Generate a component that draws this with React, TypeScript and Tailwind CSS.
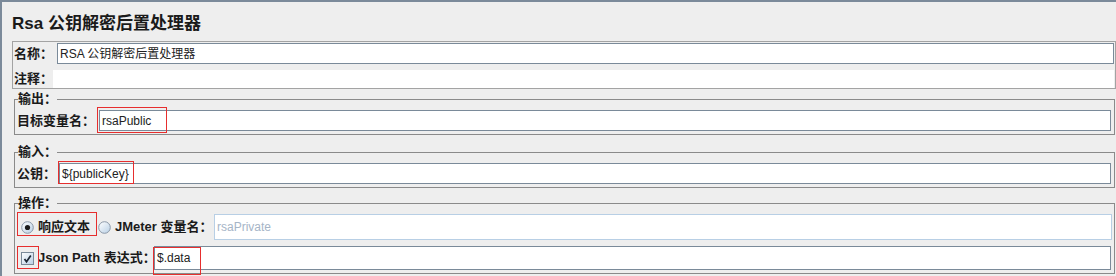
import React from 'react';

const Field = ({ value, className = '' }: { value?: React.ReactNode; className?: string }) => (
  <div className={`flex items-center bg-white border border-[#7a8a99] pl-[2px] text-[12px] text-[#222] whitespace-nowrap ${className}`}>
    {value}
  </div>
);

const Radio = ({ checked }: { checked?: boolean }) => (
  <svg width="13" height="13" viewBox="0 0 13 13" className="shrink-0">
    <defs>
      <linearGradient id={checked ? 'rg1' : 'rg2'} x1="0" y1="0" x2="1" y2="1">
        <stop offset="0" stopColor="#ffffff" />
        <stop offset="1" stopColor="#b8cfe5" />
      </linearGradient>
    </defs>
    <circle cx="6.5" cy="6.5" r="5.8" fill={`url(#${checked ? 'rg1' : 'rg2'})`} stroke="#8a98a8" strokeWidth="1" />
    {checked && <circle cx="6.5" cy="6.5" r="2.6" fill="#1a1a1a" />}
  </svg>
);

const Checkbox = () => (
  <svg width="13" height="13" viewBox="0 0 13 13" className="shrink-0">
    <defs>
      <linearGradient id="cbg" x1="0" y1="0" x2="1" y2="1">
        <stop offset="0" stopColor="#ffffff" />
        <stop offset="1" stopColor="#b8cfe5" />
      </linearGradient>
    </defs>
    <rect x="0.5" y="0.5" width="12" height="12" fill="url(#cbg)" stroke="#7a8a99" />
    <path d="M3.5 7 L5.5 9.8 L9.8 3.5" fill="none" stroke="#1f2a36" strokeWidth="1.7" />
  </svg>
);

const Mark = ({ className }: { className: string }) => (
  <div className={`absolute border border-[#e62e2e] pointer-events-none ${className}`} />
);

const App = () => {
  return (
    <div className="relative w-[1116px] h-[276px] overflow-hidden bg-[#eeeeee] border-l-2 border-t-2 border-[#7b8a9a] pl-[10px] font-['Liberation_Sans','Noto_Sans_CJK_SC',sans-serif] text-[#1a1a1a]">
      <div className="pt-[12px] pb-[7px] text-[17px] leading-[20px] font-bold whitespace-nowrap">Rsa 公钥解密后置处理器</div>

      {/* name / comment */}
      <div className="border border-[#a3a3a3]">
        <div className="flex items-center mt-[1px] mr-[1px]">
          <span className="w-[44px] pl-[1px] text-[13px] font-bold whitespace-nowrap">名称：</span>
          <Field className="flex-1 h-[21px]" value="RSA 公钥解密后置处理器" />
        </div>
        <div className="flex items-center mt-[6px] h-[18px] mr-[1px]">
          <span className="w-[40px] pl-[1px] text-[13px] font-bold whitespace-nowrap">注释：</span>
          <div className="flex-1 h-full bg-white" />
        </div>
      </div>

      {/* output */}
      <fieldset className="min-w-0 ml-[2px] mr-[1px] mt-[2px] border border-[#8a8a8a] pl-[2px] pr-[3px] pt-[3px] pb-[3px]">
        <legend className="ml-[1px] text-[13px] leading-[16px] font-bold">输出：</legend>
        <div className="flex items-center">
          <span className="w-[82px] text-[13px] font-bold whitespace-nowrap">目标变量名：</span>
          <Field className="flex-1 h-[21px]" value="rsaPublic" />
        </div>
      </fieldset>

      {/* input */}
      <fieldset className="min-w-0 ml-[2px] mr-[1px] mt-[9px] border border-[#8a8a8a] pl-[2px] pr-[3px] pt-[3px] pb-[3px]">
        <legend className="ml-[1px] text-[13px] leading-[16px] font-bold">输入：</legend>
        <div className="flex items-center">
          <span className="w-[42px] text-[13px] font-bold whitespace-nowrap">公钥：</span>
          <Field className="flex-1 h-[21px]" value="${publicKey}" />
        </div>
      </fieldset>

      {/* operation */}
      <fieldset className="min-w-0 ml-[2px] mr-[1px] mt-[7px] border border-[#8a8a8a] pl-[2px] pr-[3px] pt-[3px] pb-[3px]">
        <legend className="ml-[1px] text-[13px] leading-[16px] font-bold">操作：</legend>
        <div className="flex items-center h-[26px]">
          <div className="flex items-center gap-[4px] ml-[4px] w-[77px]">
            <Radio checked />
            <span className="text-[13px] font-bold whitespace-nowrap">响应文本</span>
          </div>
          <div className="flex items-center gap-[4px]">
            <Radio />
            <span className="w-[99px] text-[13px] font-bold whitespace-nowrap">JMeter 变量名：</span>
          </div>
          <div className="flex-1 h-full -mr-px flex items-center bg-white border border-[#b8cfe5] pl-[2px] text-[12px] text-[#a6b5c7]">
            rsaPrivate
          </div>
        </div>
        <div className="flex items-center h-[24px] mt-[6px]">
          <div className="flex items-center gap-[4px] ml-[4px]">
            <Checkbox />
            <span className="w-[116px] text-[13px] font-bold whitespace-nowrap">Json Path 表达式：</span>
          </div>
          <Field className="flex-1 h-full" value="$.data" />
        </div>
      </fieldset>

      <Mark className="left-[95px] top-[105px] w-[70px] h-[26px]" />
      <Mark className="left-[56px] top-[159px] w-[76px] h-[23px]" />
      <Mark className="left-[15px] top-[210px] w-[80px] h-[24px]" />
      <Mark className="left-[15px] top-[244px] w-[22px] h-[23px]" />
      <Mark className="left-[151px] top-[245px] w-[48px] h-[28px]" />
    </div>
  );
};

export default App;
